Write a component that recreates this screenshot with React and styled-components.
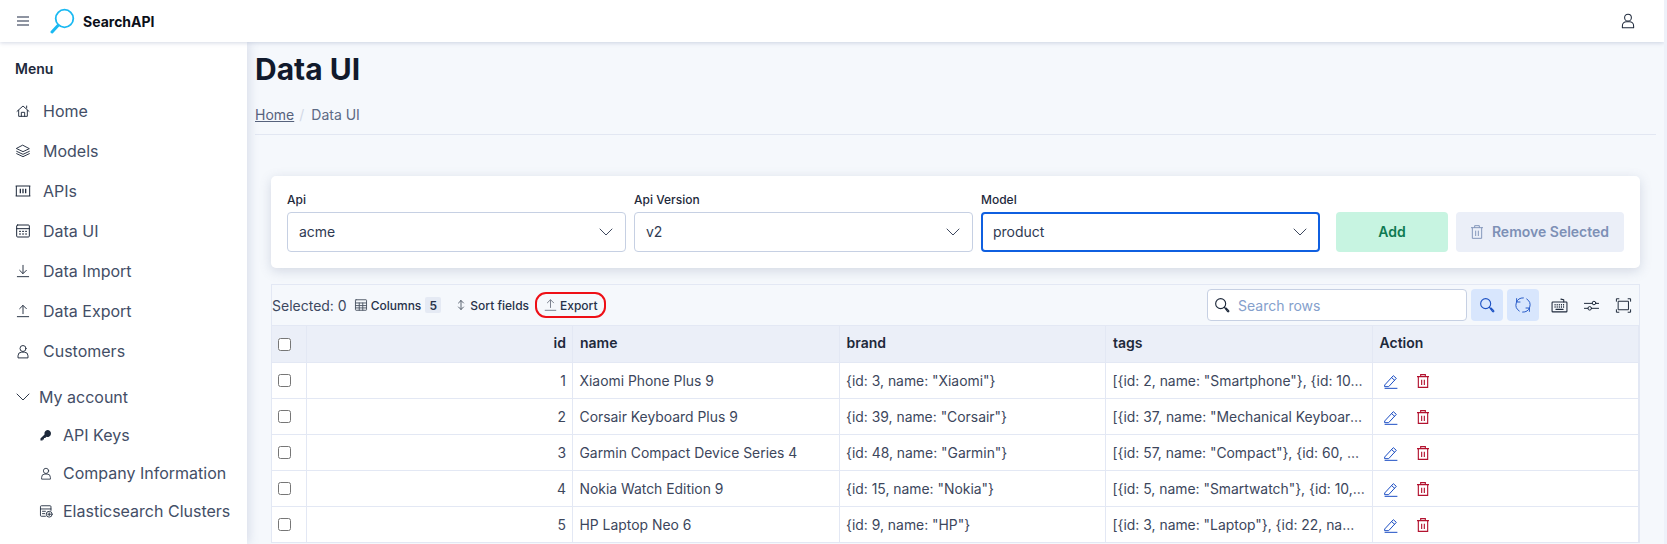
import React from "react";
import styled, { createGlobalStyle } from "styled-components";

const Global = createGlobalStyle`
  html, body { margin: 0; padding: 0; height: 100%; overflow: hidden; }
  body { font-family: Inter, "Noto Sans", sans-serif; background: #eef1f9; color: #1e293b; }
  #root { height: 100%; }
  * { box-sizing: border-box; }
`;

const Shell = styled.div`
  height: 544px; width: 1664px; overflow: hidden; display: flex; flex-direction: column; background: #f5f8fc;
`;
const TopBar = styled.header`
  height: 42px; flex: none; background: #fff; display: flex; align-items: center; padding: 0 27px 0 16px;
  box-shadow: 0 1px 4px rgba(100,116,160,.28); position: relative; z-index: 3;
`;
const IconSlot = styled.span`
  display: inline-flex; align-items: center; justify-content: center; color: ${p => p.$color || "#1e293b"}; flex: none;
  width: ${p => p.$w || 16}px; height: ${p => p.$w || 16}px;
`;
const Logo = styled.svg`width: 26px; height: 26px; margin-left: 19px; flex: none;`;
const Brand = styled.span`font-weight: 700; font-size: 14px; color: #0b0f19; margin-left: 8px; flex: 1;`;
const Body = styled.div`flex: 1; display: flex; min-height: 0;`;
const Sidebar = styled.aside`
  width: 247px; flex: none; background: #fff; box-shadow: 2px 0 10px rgba(100,116,160,.2); position: relative; z-index: 2; padding-top: 16px;
`;
const MenuTitle = styled.div`
  font-weight: 600; font-size: 14px; line-height: 22px; color: #1e293b; padding-left: 15px; margin-bottom: 11px;
`;
const Item = styled.div`
  height: 40px; display: flex; align-items: center; gap: 12px; padding-left: 15px; font-size: 16px; color: #434e66;
`;
const Group = styled(Item)`margin-top: 6px; gap: 8px;`;
const SubItem = styled.div`
  height: 38px; display: flex; align-items: center; gap: 10px; padding-left: 39px; font-size: 16px; color: #434e66;
`;
const SubList = styled.div`margin-top: -1px;`;
const Main = styled.main`flex: 1; padding: 0 8px; min-width: 0;`;
const Title = styled.h1`margin: 0; padding-top: 7px; font-size: 30px; line-height: 40px; font-weight: 700; color: #111a2c;`;
const Crumbs = styled.nav`
  margin-top: 16px; height: 30px; display: flex; align-items: flex-start; font-size: 14px; line-height: 20px; color: #5d6a85; border-bottom: 1px solid #e2e7f2;
`;
const CrumbLink = styled.a`color: #56627c; text-decoration: underline;`;
const CrumbSep = styled.span`color: #d3d9e6; margin: 0 7px 0 5px;`;
const Content = styled.section`margin: 41px 16px 0;`;
const Card = styled.div`
  height: 92px; background: #fff; border-radius: 5px; box-shadow: 0 3px 12px rgba(90,105,140,.22); padding: 16px;
  display: flex; align-items: flex-end; gap: 16px;
`;
const Fields = styled.div`display: grid; grid-template-columns: repeat(3, 339px); gap: 8px;`;
const Field = styled.label`display: block;`;
const FieldLabel = styled.span`display: block; font-size: 12px; font-weight: 500; line-height: 16px; margin-bottom: 4px; color: #1e293b;`;
const Select = styled.div`
  height: 40px; background: #fff; border-radius: 4px; display: flex; align-items: center; justify-content: space-between;
  font-size: 14px; color: #2f3a52;
  border: ${p => p.$focus ? "2px solid #0f5fe0" : "1px solid #c6d0e3"};
  padding: 0 ${p => p.$focus ? 10 : 11}px 1px;
`;
const Buttons = styled.div`display: flex; gap: 8px;`;
const Add = styled.button`
  width: 112px; height: 40px; border: 0; border-radius: 4px; padding: 0 0 1px; background: #c7f4e1; color: #0f7a52; font: 600 14px Inter, sans-serif;
`;
const Remove = styled.button`
  width: 168px; height: 40px; border: 0; border-radius: 4px; padding: 0 2px 1px 0; background: #ebeff8; color: #7d90b6; font: 600 14px Inter, sans-serif;
  display: flex; align-items: center; justify-content: center; gap: 7px;
`;
const TableBox = styled.div`margin-top: 16px; border: 1px solid #e3e8f4; border-bottom: 0; background: #fff;`;
const Toolbar = styled.div`height: 40px; background: #f5f8fc; display: flex; align-items: center;`;
const Selected = styled.span`font-size: 14px; color: #3d4860; margin-right: 2px;`;
const Tool = styled.button`
  border: 0; background: none; padding: 0 5px; margin-left: ${p => p.$ml || 0}px; height: 26px; display: inline-flex; align-items: center; gap: 3px;
  font: 500 12px Inter, sans-serif; color: #27324a;
`;
const Badge = styled.span`
  min-width: 16px; height: 16px; background: #e5eaf4; border-radius: 2px; margin-left: 1px; font-weight: 600; display: inline-flex; align-items: center; justify-content: center;
`;
const ExportTool = styled(Tool)`
  border: 2px solid #ee0f16; border-radius: 11px; width: 71px; padding: 0 0 0 6px; gap: 2px;
`;
const Spacer = styled.div`flex: 1;`;
const SearchBox = styled.div`
  width: 260px; height: 32px; background: #fff; border: 1px solid #c6d0e3; border-radius: 4px; display: flex; align-items: center; gap: 8px; padding-left: 6px;
  font-size: 14px; color: #84a0cc;
`;
const SquareBtn = styled.span`
  width: 32px; height: 32px; border-radius: 4px; margin-left: 4px; background: #d8e6fd;
  color: #1d52c4; display: inline-flex; align-items: center; justify-content: center;
`;
const PlainBtn = styled.span`
  width: 32px; height: 32px; margin-left: ${p => p.$ml || 0}px; color: #1e293b; display: inline-flex; align-items: center; justify-content: center;
`;
const Table = styled.table`width: 100%; border-collapse: collapse; table-layout: fixed; font-size: 13.9px; color: #3c465c;`;
const CheckCol = styled.col`width: 34px;`;
const Th = styled.th`
  height: 37px; background: #ebeff8; font-size: 14px; font-weight: 600; color: #1e293b; text-align: ${p => p.$right ? "right" : "left"};
  padding: 0 6px ${p => p.$first ? 0 : 3}px 7px;
  border: 1px solid #e3e8f4; border-left: ${p => p.$first ? 0 : "1px solid #e3e8f4"};
`;
const Td = styled.td`
  height: 36px; padding: 0 6px 0 6.5px; text-align: ${p => p.$right ? "right" : "left"}; border: 1px solid #e3e8f4; border-left: ${p => p.$first ? 0 : "1px solid #e3e8f4"};
  white-space: nowrap; overflow: hidden; text-overflow: ellipsis;
`;
const Check = styled.input.attrs({ type: "checkbox" })`margin: 0 0 0 -1px; display: block; width: 13px; height: 13px;`;
const Actions = styled.div`display: flex; align-items: center; gap: 16px; padding-left: 4px;`;

const Ico = ({ size = 16, sw = 1.4, children }) => (
  <svg width={size} height={size} viewBox="0 0 24 24" fill="none" stroke="currentColor" strokeWidth={sw} strokeLinecap="round" strokeLinejoin="round">{children}</svg>
);
const Home = () => <Ico><path d="M3 12.5 12 4.5l9 8M17.5 4.5v3" /><path d="M5.5 11v9h13v-9M9.5 20v-6h5v6" /></Ico>;
const Layers = () => <Ico><path d="M12 3.5 21.5 8.5 12 13 2.5 8.5zM2.5 12.5 12 17l9.5-4.5M2.5 16 12 20.5 21.5 16" /></Ico>;
const Apis = () => <Ico sw={1.5}><path d="M1 4.5h22M2 4.5v15M22 4.5v15M1 19.5h22" strokeLinecap="butt" /><path d="M8 8.5v7M12 8.5v7M16 8.5v7" strokeLinecap="butt" strokeWidth="1.9" /></Ico>;
const TableIco = () => <Ico sw={1.5}><rect x="2.5" y="3" width="19" height="18" rx="1.5" /><path d="M2.5 8.5h19" /><path d="M6 12.5h12M6 16.5h12" strokeDasharray="3 1.6" strokeLinecap="butt" /></Ico>;
const Import = () => <Ico><path d="M12 3.5v12M7 11l5 5 5-5M3.5 20.5h17" /></Ico>;
const Export = () => <Ico><path d="M12 16V4M7 8.5l5-5 5 5M3.5 20.5h17" /></Ico>;
const User = ({ size = 17 }) => <Ico size={size} sw={1.4}><circle cx="12" cy="7.5" r="4.5" /><path d="M4.5 21v-2.5A5.5 5.5 0 0 1 10 13h4a5.5 5.5 0 0 1 5.5 5.5V21z" /></Ico>;
const Chevron = ({ size = 16 }) => <Ico size={size} sw={1.4}><path d="m3 7.5 9 9 9-9" /></Ico>;
const Key = () => <svg width="14" height="14" viewBox="0 0 24 24" fill="currentColor"><path d="M14.5 3.5a6 6 0 1 1-1.8 11.7l-2 2H8.5v2.3H6.2v2H2.500v-3.700l7-6.800a6 6 0 0 1 5-7.500z" /></svg>;
const Cluster = () => <Ico sw={1.5}><path d="M11 21H4a1.5 1.5 0 0 1-1.5-1.5v-15A1.5 1.5 0 0 1 4 3h15a1.5 1.5 0 0 1 1.5 1.5V11M2.5 8.5h18M6 12.5h5M6 16.5h4" /><circle cx="17.5" cy="17.5" r="5" /><path d="M17.5 15v5M15 17.5h5" /></Ico>;
const Trash = ({ size = 16, sw = 1.7 }) => <Ico size={size} sw={sw}><path d="M3 5.5h18M8.5 5.5V2.5h7v3M5 5.5V21.5h14V5.5M10 10v8M14 10v8" strokeLinecap="butt" strokeLinejoin="miter" /></Ico>;
const Edit = () => <Ico sw={1.5}><path d="M3 17.5 15.5 4l4.5 4-11.5 12.5H3zM13 7l4.5 4M3 23h18" /></Ico>;
const Search = ({ size = 16 }) => <Ico size={size} sw={1.7}><circle cx="10" cy="10" r="7.5" /><path d="m15.5 15.5 1.5 1.5" /><path d="m17 17.5 1-1 4 4a1 1 0 0 1-1.5 1.5z" /></Ico>;
const Refresh = () => <Ico size={18} sw={1.25}><path d="M7 20A9.5 9.5 0 0 1 12.500 2.500M17 4A9.5 9.5 0 0 1 11.500 21.500" /><path d="M3.500 3.500v4.500H8M20.500 20.500V16H16" /></Ico>;
const Keyboard = () => <Ico size={17} sw={1.5}><rect x="1.5" y="7" width="21" height="14" rx="1" /><path d="M18 7V4L14 3" /><path d="M5 11h14M5 14h14" strokeDasharray="1.5 1.5" strokeLinecap="butt" strokeWidth="2" /><path d="M7 17.5h10" /></Ico>;
const Sliders = () => <Ico size={17} sw={1.4}><path d="M2 9h11M18 9h4M2 16h5M12 16h10" /><circle cx="15.5" cy="8.5" r="2.5" /><circle cx="9.5" cy="16" r="2.5" /></Ico>;
const Full = () => <Ico size={17} sw={1.4}><rect x="5" y="6" width="14" height="12" /><path d="M2 6V2.5h3.5M18.5 2.5H22V6M22 18v3.5h-3.5M5.5 21.500H2V18" /></Ico>;
const Sort = () => <Ico size={12} sw={1.8}><path d="M12 3v18M7 8l5-5 5 5M7 16l5 5 5-5" /></Ico>;
const Columns = () => <Ico size={14} sw={1.6}><rect x="2.5" y="3" width="19" height="18" rx="1" /><path d="M2.5 8.5h19M2.5 13h19M2.5 17h19M9 8.5V21M15 8.5V21" /></Ico>;
const Burger = () => <svg width="14" height="12" viewBox="0 0 14 12" stroke="#1f2a44" strokeWidth="1.2"><path d="M1 2h12M1 6h12M1 10h12" /></svg>;

const nav = [["Home", Home], ["Models", Layers], ["APIs", Apis], ["Data UI", TableIco], ["Data Import", Import], ["Data Export", Export], ["Customers", User]];
const subs = [["API Keys", Key], ["Company Information", User], ["Elasticsearch Clusters", Cluster]];
const rows = [
  [1, "Xiaomi Phone Plus 9", '{id: 3, name: "Xiaomi"}', '[{id: 2, name: "Smartphone"}, {id: 10, name: "Flagship"}]'],
  [2, "Corsair Keyboard Plus 9", '{id: 39, name: "Corsair"}', '[{id: 37, name: "Mechanical Keyboard"}, {id: 4, name: "RGB"}]'],
  [3, "Garmin Compact Device Series 4", '{id: 48, name: "Garmin"}', '[{id: 57, name: "Compact"}, {id: 60, name: "Device"}]'],
  [4, "Nokia Watch Edition 9", '{id: 15, name: "Nokia"}', '[{id: 5, name: "Smartwatch"}, {id: 10, name: "Flagship"}]'],
  [5, "HP Laptop Neo 6", '{id: 9, name: "HP"}', '[{id: 3, name: "Laptop"}, {id: 22, name: "Business"}]'],
];

export default function App() {
  return (
    <>
      <Global />
      <Shell>
        <TopBar>
          <IconSlot $w={14}><Burger /></IconSlot>
          <Logo viewBox="0 0 26 26" fill="none">
            <circle cx="15.5" cy="10.5" r="8.8" stroke="#1ab9f2" strokeWidth="1.8" />
            <path d="M9 17.5 3 24" stroke="#1ab9f2" strokeWidth="3" strokeLinecap="round" />
          </Logo>
          <Brand>SearchAPI</Brand>
          <IconSlot $w={18}><User size={20} /></IconSlot>
        </TopBar>
        <Body>
          <Sidebar>
            <MenuTitle>Menu</MenuTitle>
            {nav.map(([t, I]) => <Item key={t}><IconSlot><I /></IconSlot>{t}</Item>)}
            <Group><IconSlot><Chevron /></IconSlot>My account</Group>
            <SubList>
              {subs.map(([t, I]) => <SubItem key={t}><IconSlot $w={14}><I /></IconSlot>{t}</SubItem>)}
            </SubList>
          </Sidebar>
          <Main>
            <Title>Data UI</Title>
            <Crumbs><CrumbLink>Home</CrumbLink><CrumbSep>/</CrumbSep>Data UI</Crumbs>
            <Content>
              <Card>
                <Fields>
                  <Field><FieldLabel>Api</FieldLabel><Select>acme<Chevron /></Select></Field>
                  <Field><FieldLabel>Api Version</FieldLabel><Select>v2<Chevron /></Select></Field>
                  <Field><FieldLabel>Model</FieldLabel><Select $focus>product<Chevron /></Select></Field>
                </Fields>
                <Buttons>
                  <Add>Add</Add>
                  <Remove><Trash size={16} sw={1.4} />Remove Selected</Remove>
                </Buttons>
              </Card>
              <TableBox>
                <Toolbar>
                  <Selected>Selected: 0</Selected>
                  <Tool><IconSlot $w={14} $color="#4b5563"><Columns /></IconSlot>Columns<Badge>5</Badge></Tool>
                  <Tool $ml={4}><IconSlot $w={12} $color="#4b5563"><Sort /></IconSlot>Sort fields</Tool>
                  <ExportTool $ml={1}><IconSlot $w={15} $color="#6b7280"><Export /></IconSlot>Export</ExportTool>
                  <Spacer />
                  <SearchBox><IconSlot><Search /></IconSlot>Search rows</SearchBox>
                  <SquareBtn><Search /></SquareBtn>
                  <SquareBtn><Refresh /></SquareBtn>
                  <PlainBtn $ml={4}><Keyboard /></PlainBtn>
                  <PlainBtn><Sliders /></PlainBtn>
                  <PlainBtn><Full /></PlainBtn>
                </Toolbar>
                <Table>
                  <colgroup>
                    <CheckCol /><col /><col /><col /><col /><col />
                  </colgroup>
                  <thead>
                    <tr>
                      <Th $first><Check /></Th><Th $right>id</Th><Th>name</Th><Th>brand</Th><Th>tags</Th><Th>Action</Th>
                    </tr>
                  </thead>
                  <tbody>
                    {rows.map(r => (
                      <tr key={r[0]}>
                        <Td $first><Check /></Td>
                        <Td $right>{r[0]}</Td><Td>{r[1]}</Td><Td>{r[2]}</Td><Td>{r[3]}</Td>
                        <Td><Actions>
                          <IconSlot $color="#1d4fc4"><Edit /></IconSlot>
                          <IconSlot $color="#b3122f"><Trash /></IconSlot>
                        </Actions></Td>
                      </tr>
                    ))}
                  </tbody>
                </Table>
              </TableBox>
            </Content>
          </Main>
        </Body>
      </Shell>
    </>
  );
}
